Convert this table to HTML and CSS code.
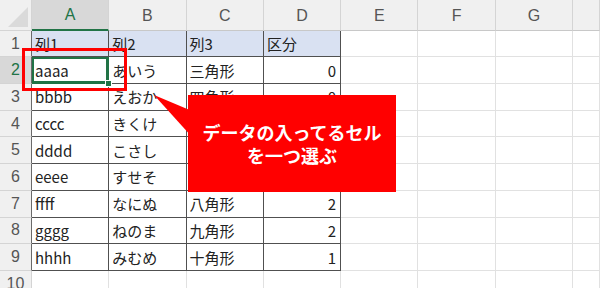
FILE: index.html
```html
<!DOCTYPE html>
<html lang="ja">
<head>
<meta charset="UTF-8">
<title>Sheet1</title>
<link rel="stylesheet" href="styles.css">
</head>
<body>

<div class="sheet">
  <!-- column headers -->
  <div class="corner"><span class="corner-tri"></span></div>
  <div class="col-head active">A</div>
  <div class="col-head">B</div>
  <div class="col-head">C</div>
  <div class="col-head">D</div>
  <div class="col-head">E</div>
  <div class="col-head">F</div>
  <div class="col-head">G</div>
  <div class="col-head"></div>

  <!-- row 1: table header -->
  <div class="row-head in">1</div>
  <div class="cell t th">列1</div>
  <div class="cell t th">列2</div>
  <div class="cell t th">列3</div>
  <div class="cell t th">区分</div>
  <div class="cell"></div><div class="cell"></div><div class="cell"></div><div class="cell"></div>

  <div class="row-head in active">2</div>
  <div class="cell t selected">aaaa<span class="handle"></span></div>
  <div class="cell t">あいう</div>
  <div class="cell t">三角形</div>
  <div class="cell t num">0</div>
  <div class="cell"></div><div class="cell"></div><div class="cell"></div><div class="cell"></div>

  <div class="row-head in">3</div>
  <div class="cell t">bbbb</div>
  <div class="cell t">えおか</div>
  <div class="cell t">四角形</div>
  <div class="cell t num">0</div>
  <div class="cell"></div><div class="cell"></div><div class="cell"></div><div class="cell"></div>

  <div class="row-head in">4</div>
  <div class="cell t">cccc</div>
  <div class="cell t">きくけ</div>
  <div class="cell t"></div>
  <div class="cell t num"></div>
  <div class="cell"></div><div class="cell"></div><div class="cell"></div><div class="cell"></div>

  <div class="row-head in">5</div>
  <div class="cell t">dddd</div>
  <div class="cell t">こさし</div>
  <div class="cell t"></div>
  <div class="cell t num"></div>
  <div class="cell"></div><div class="cell"></div><div class="cell"></div><div class="cell"></div>

  <div class="row-head in">6</div>
  <div class="cell t">eeee</div>
  <div class="cell t">すせそ</div>
  <div class="cell t"></div>
  <div class="cell t num"></div>
  <div class="cell"></div><div class="cell"></div><div class="cell"></div><div class="cell"></div>

  <div class="row-head in">7</div>
  <div class="cell t">ffff</div>
  <div class="cell t">なにぬ</div>
  <div class="cell t">八角形</div>
  <div class="cell t num">2</div>
  <div class="cell"></div><div class="cell"></div><div class="cell"></div><div class="cell"></div>

  <div class="row-head in">8</div>
  <div class="cell t">gggg</div>
  <div class="cell t">ねのま</div>
  <div class="cell t">九角形</div>
  <div class="cell t num">2</div>
  <div class="cell"></div><div class="cell"></div><div class="cell"></div><div class="cell"></div>

  <div class="row-head in">9</div>
  <div class="cell t">hhhh</div>
  <div class="cell t">みむめ</div>
  <div class="cell t">十角形</div>
  <div class="cell t num">1</div>
  <div class="cell"></div><div class="cell"></div><div class="cell"></div><div class="cell"></div>

  <div class="row-head">10</div>
  <div class="cell"></div><div class="cell"></div><div class="cell"></div><div class="cell"></div>
  <div class="cell"></div><div class="cell"></div><div class="cell"></div><div class="cell"></div>

  <!-- annotation over the sheet -->
  <div class="mark"></div>
  <svg class="tail" width="600" height="288" viewBox="0 0 600 288">
    <polygon points="154,95 192,111 192,137" fill="#ff0000"/>
  </svg>
  <div class="callout">データの入ってるセル<br>を一つ選ぶ</div>
</div>

</body>
</html>
```

FILE: styles.css
```css
body {
  margin: 0;
  background: #fff;
  font-family: "Noto Sans CJK JP", "Noto Sans", sans-serif;
}
.sheet {
  position: relative;
  width: 600px;
  height: 288px;
  overflow: hidden;
  display: grid;
  grid-template-columns: 32px repeat(7, 77.3px) 1fr;
  grid-template-rows: 30.7px repeat(10, 26.7px);
}
.corner {
  position: relative;
  background: #f0f0f0;
  border-right: 1px solid #d4d4d4;
  border-bottom: 1px solid #d4d4d4;
}
.corner-tri {
  position: absolute;
  right: 3px;
  bottom: 3px;
  width: 0;
  height: 0;
  border-left: 20px solid transparent;
  border-bottom: 20px solid #dadada;
}
.col-head {
  background: #f0f0f0;
  border-right: 1px solid #d4d4d4;
  border-bottom: 1px solid #c8c8c8;
  color: #555;
  font-family: "Liberation Sans", Arial, sans-serif;
  font-size: 16px;
  display: flex;
  align-items: center;
  justify-content: center;
  padding-top: 2px;
}
.row-head {
  background: #f0f0f0;
  border-right: 1px solid #d4d4d4;
  border-bottom: 1px solid #d4d4d4;
  color: #555;
  font-family: "Liberation Sans", Arial, sans-serif;
  font-size: 16px;
  display: flex;
  align-items: center;
  justify-content: center;
}
.row-head.in {
  border-right-color: #6a6a6a;
}
.col-head.active,
.row-head.active {
  background: #d8d8d8;
  color: #217346;
}
.col-head.active {
  border-bottom: 2px solid #217346;
}
.cell {
  position: relative;
  border-right: 1px solid #e1e1e1;
  border-bottom: 1px solid #e1e1e1;
  font-size: 15px;
  color: #222;
  padding-left: 3px;
  display: flex;
  align-items: center;
  white-space: nowrap;
}
.cell.t {
  border-right-color: #505050;
  border-bottom-color: #505050;
}
.cell.th {
  background: #d9e1f2;
}
.cell.num {
  justify-content: flex-end;
  padding-right: 4px;
}
.cell.selected {
  box-shadow: inset 0 0 0 2px #217346;
  border-right-color: #217346;
  border-bottom-color: #217346;
}
.handle {
  position: absolute;
  right: -4px;
  bottom: -4px;
  width: 5px;
  height: 5px;
  background: #217346;
  border: 1px solid #fff;
  z-index: 2;
}

/* red frame around the chosen cell */
.mark {
  position: absolute;
  left: 22px;
  top: 48px;
  width: 99px;
  height: 37px;
  border: 3px solid #ff0000;
  z-index: 3;
}
.tail {
  position: absolute;
  left: 0;
  top: 0;
  z-index: 3;
}
.callout {
  position: absolute;
  left: 188px;
  top: 95px;
  width: 208px;
  height: 97px;
  background: #ff0000;
  color: #fff;
  font-size: 18px;
  font-weight: bold;
  line-height: 23px;
  text-align: center;
  display: flex;
  align-items: center;
  justify-content: center;
  z-index: 3;
}
```
